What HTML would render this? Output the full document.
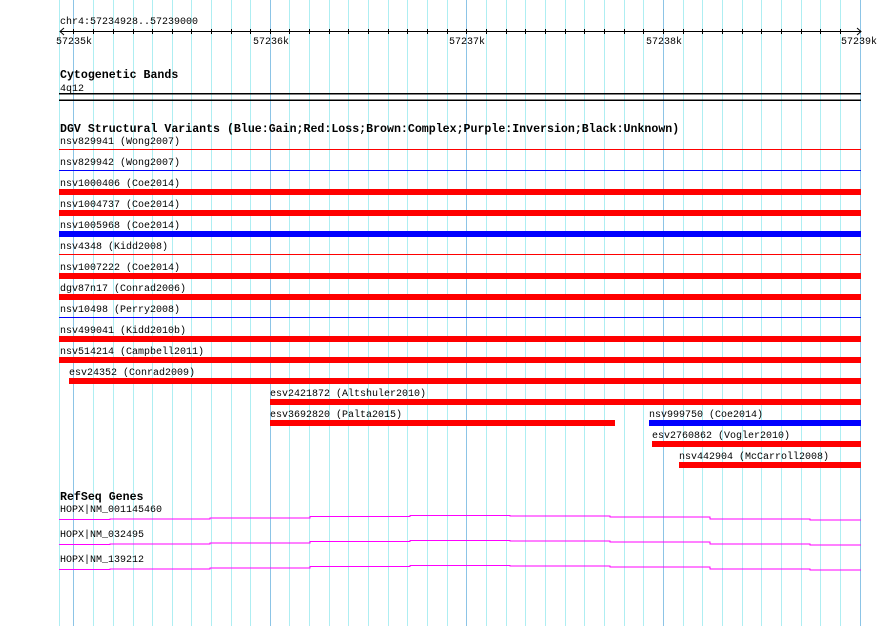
<!DOCTYPE html>
<html><head><meta charset="utf-8"><style>
html,body{margin:0;padding:0;background:#fff;width:890px;height:626px;overflow:hidden}
svg text{font-family:"Liberation Mono","DejaVu Sans Mono",monospace;font-size:10px;fill:#000}
svg text.h{font-weight:bold;font-size:11.6px}
</style></head><body>
<svg width="890" height="626" xmlns="http://www.w3.org/2000/svg">
<g stroke="#aeeef2" stroke-width="1">
<line x1="59.5" y1="0" x2="59.5" y2="626"/>
<line x1="93.5" y1="0" x2="93.5" y2="626"/><line x1="113.5" y1="0" x2="113.5" y2="626"/><line x1="133.5" y1="0" x2="133.5" y2="626"/><line x1="152.5" y1="0" x2="152.5" y2="626"/><line x1="172.5" y1="0" x2="172.5" y2="626"/><line x1="191.5" y1="0" x2="191.5" y2="626"/><line x1="211.5" y1="0" x2="211.5" y2="626"/><line x1="231.5" y1="0" x2="231.5" y2="626"/><line x1="250.5" y1="0" x2="250.5" y2="626"/>
<line x1="289.5" y1="0" x2="289.5" y2="626"/><line x1="309.5" y1="0" x2="309.5" y2="626"/><line x1="329.5" y1="0" x2="329.5" y2="626"/><line x1="348.5" y1="0" x2="348.5" y2="626"/><line x1="368.5" y1="0" x2="368.5" y2="626"/><line x1="388.5" y1="0" x2="388.5" y2="626"/><line x1="407.5" y1="0" x2="407.5" y2="626"/><line x1="427.5" y1="0" x2="427.5" y2="626"/><line x1="447.5" y1="0" x2="447.5" y2="626"/>
<line x1="486.5" y1="0" x2="486.5" y2="626"/><line x1="506.5" y1="0" x2="506.5" y2="626"/><line x1="525.5" y1="0" x2="525.5" y2="626"/><line x1="545.5" y1="0" x2="545.5" y2="626"/><line x1="565.5" y1="0" x2="565.5" y2="626"/><line x1="584.5" y1="0" x2="584.5" y2="626"/><line x1="604.5" y1="0" x2="604.5" y2="626"/><line x1="624.5" y1="0" x2="624.5" y2="626"/><line x1="643.5" y1="0" x2="643.5" y2="626"/>
<line x1="683.5" y1="0" x2="683.5" y2="626"/><line x1="702.5" y1="0" x2="702.5" y2="626"/><line x1="722.5" y1="0" x2="722.5" y2="626"/><line x1="742.5" y1="0" x2="742.5" y2="626"/><line x1="761.5" y1="0" x2="761.5" y2="626"/><line x1="781.5" y1="0" x2="781.5" y2="626"/><line x1="801.5" y1="0" x2="801.5" y2="626"/><line x1="820.5" y1="0" x2="820.5" y2="626"/><line x1="840.5" y1="0" x2="840.5" y2="626"/>
</g>
<g stroke="#8cc4e6" stroke-width="1">
<line x1="73.5" y1="0" x2="73.5" y2="626"/><line x1="270.5" y1="0" x2="270.5" y2="626"/><line x1="466.5" y1="0" x2="466.5" y2="626"/><line x1="663.5" y1="0" x2="663.5" y2="626"/><line x1="860.5" y1="0" x2="860.5" y2="626"/>
</g>
<!-- ruler -->
<text x="60" y="24">chr4:57234928..57239000</text>
<g stroke="#000" stroke-width="1" fill="none">
<line x1="60" y1="31.5" x2="861" y2="31.5"/>
<polyline points="64,28 60,31.5 64,35"/><polyline points="857,28 861,31.5 857,35"/>
<path d="M73.5 29v5M93.5 29v5M113.5 29v5M133.5 29v5M152.5 29v5M172.5 29v5M191.5 29v5M211.5 29v5M231.5 29v5M250.5 29v5M270.5 29v5M289.5 29v5M309.5 29v5M329.5 29v5M348.5 29v5M368.5 29v5M388.5 29v5M407.5 29v5M427.5 29v5M447.5 29v5M466.5 29v5M486.5 29v5M506.5 29v5M525.5 29v5M545.5 29v5M565.5 29v5M584.5 29v5M604.5 29v5M624.5 29v5M643.5 29v5M663.5 29v5M683.5 29v5M702.5 29v5M722.5 29v5M742.5 29v5M761.5 29v5M781.5 29v5M801.5 29v5M820.5 29v5M840.5 29v5"/>
</g>
<text x="56" y="44">57235k</text><text x="253" y="44">57236k</text><text x="449" y="44">57237k</text><text x="646" y="44">57238k</text><text x="841" y="44">57239k</text>
<!-- cyto -->
<text class="h" x="60" y="78">Cytogenetic Bands</text>
<text x="60" y="91">4q12</text>
<rect x="59" y="93" width="802" height="1.5" fill="#000"/>
<rect x="59" y="99.5" width="802" height="1.5" fill="#000"/>
<!-- DGV -->
<text class="h" x="60" y="132">DGV Structural Variants (Blue:Gain;Red:Loss;Brown:Complex;Purple:Inversion;Black:Unknown)</text>
<text x="60" y="144">nsv829941 (Wong2007)</text><rect x="59" y="149" width="802" height="1" fill="#f00"/>
<text x="60" y="165">nsv829942 (Wong2007)</text><rect x="59" y="170" width="802" height="1" fill="#00f"/>
<text x="60" y="186">nsv1000406 (Coe2014)</text><rect x="59" y="189" width="802" height="6" fill="#f00"/>
<text x="60" y="207">nsv1004737 (Coe2014)</text><rect x="59" y="210" width="802" height="6" fill="#f00"/>
<text x="60" y="228">nsv1005968 (Coe2014)</text><rect x="59" y="231" width="802" height="6" fill="#00f"/>
<text x="60" y="249">nsv4348 (Kidd2008)</text><rect x="59" y="254" width="802" height="1" fill="#f00"/>
<text x="60" y="270">nsv1007222 (Coe2014)</text><rect x="59" y="273" width="802" height="6" fill="#f00"/>
<text x="60" y="291">dgv87n17 (Conrad2006)</text><rect x="59" y="294" width="802" height="6" fill="#f00"/>
<text x="60" y="312">nsv10498 (Perry2008)</text><rect x="59" y="317" width="802" height="1" fill="#00f"/>
<text x="60" y="333">nsv499041 (Kidd2010b)</text><rect x="59" y="336" width="802" height="6" fill="#f00"/>
<text x="60" y="354">nsv514214 (Campbell2011)</text><rect x="59" y="357" width="802" height="6" fill="#f00"/>
<text x="69" y="375">esv24352 (Conrad2009)</text><rect x="69" y="378" width="792" height="6" fill="#f00"/>
<text x="270" y="396">esv2421872 (Altshuler2010)</text><rect x="270" y="399" width="591" height="6" fill="#f00"/>
<text x="270" y="417">esv3692820 (Palta2015)</text><rect x="270" y="420" width="345" height="6" fill="#f00"/>
<text x="649" y="417">nsv999750 (Coe2014)</text><rect x="649" y="420" width="212" height="6" fill="#00f"/>
<text x="652" y="438">esv2760862 (Vogler2010)</text><rect x="652" y="441" width="209" height="6" fill="#f00"/>
<text x="679" y="459">nsv442904 (McCarroll2008)</text><rect x="679" y="462" width="182" height="6" fill="#f00"/>
<!-- RefSeq -->
<text class="h" x="60" y="500">RefSeq Genes</text>
<text x="60" y="512">HOPX|NM_001145460</text>
<text x="60" y="537">HOPX|NM_032495</text>
<text x="60" y="562">HOPX|NM_139212</text>
<g fill="none" stroke="#f0f" stroke-width="1">
<path id="g" d="M59 519.5H110V519H210V518H310V516.5H410V515.5H510V516H610V517H710V519H810V520H861"/>
<path d="M59 544.5H110V544H210V543H310V541.5H410V540.5H510V541H610V542H710V544H810V545H861"/>
<path d="M59 569.5H110V569H210V568H310V566.5H410V565.5H510V566H610V567H710V569H810V570H861"/>
</g>
</svg>
</body></html>
